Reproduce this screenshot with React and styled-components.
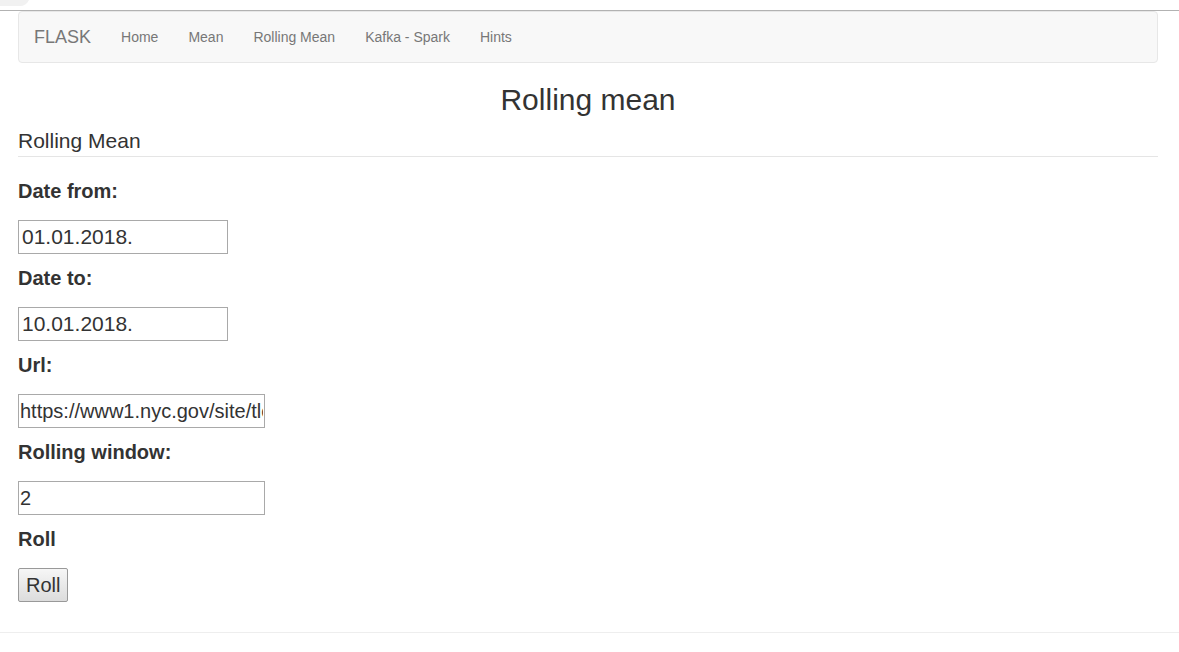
import React from "react";
import styled, { createGlobalStyle } from "styled-components";

const GlobalStyle = createGlobalStyle`
  *, *::before, *::after { box-sizing: border-box; }
  body {
    margin: 0;
    background: #fff;
    color: #333;
    font-family: "Liberation Sans", Arial, sans-serif;
    font-size: 20px;
  }
`;

const TopStrip = styled.div`
  display: flex;
  align-items: flex-start;
  height: 11px;
  border-bottom: 1px solid #b2b2b2;
`;

const TabEdge = styled.svg`
  display: block;
  width: 29px;
  height: 6px;
`;

const Page = styled.div`
  padding: 0 21px 30px 18px;
`;

const Navbar = styled.nav`
  display: flex;
  min-height: 52px;
  border: 1px solid #e7e7e7;
  border-radius: 4px;
  background: #f8f8f8;
`;

const Brand = styled.a`
  padding: 15px;
  color: #777;
  font-size: 18px;
  line-height: 20px;
  text-decoration: none;
`;

const NavList = styled.ul`
  display: flex;
  margin: 0;
  padding: 0;
  list-style: none;
`;

const NavLink = styled.a`
  display: block;
  padding: 15px;
  color: #777;
  font-size: 14px;
  line-height: 20px;
  text-decoration: none;

  &:hover { color: #333; }
`;

const Title = styled.h2`
  margin: 20px 0 10px;
  font-size: 30px;
  font-weight: 400;
  line-height: 33px;
  text-align: center;
`;

const Legend = styled.h3`
  margin: 0 0 20px;
  border-bottom: 1px solid #e5e5e5;
  font-size: 21px;
  font-weight: 400;
  line-height: 30px;
`;

const Form = styled.form`
  display: flex;
  flex-direction: column;
  gap: 10px;
`;

const Field = styled.div`
  display: flex;
  flex-direction: column;
  align-items: flex-start;
  gap: 15px;
`;

const Label = styled.label`
  font-weight: 700;
  line-height: 28px;
`;

const TextInput = styled.input`
  width: ${(p) => (p.$date ? "210px" : "247px")};
  max-width: 100%;
  height: 34px;
  padding: ${(p) => (p.$date ? "1px 3px" : "1px")};
  border: 1px solid #a9a9a9;
  border-radius: 0;
  background: #fff;
  color: #333;
  font-family: inherit;
  font-size: ${(p) => (p.$date ? "21px" : "20px")};
`;

const SubmitButton = styled.button`
  height: 34px;
  padding: 1px 7px;
  border: 1px solid #999;
  border-radius: 2px;
  background: linear-gradient(#f6f6f6, #dcdcdc);
  color: #333;
  font-family: inherit;
  font-size: 20px;
`;

const Divider = styled.hr`
  margin: 0 0 19px;
  border: 0;
  border-top: 1px solid #eee;
`;

const links = ["Home", "Mean", "Rolling Mean", "Kafka - Spark", "Hints"];

const fields = [
  { id: "date-from", label: "Date from:", value: "01.01.2018.", date: true },
  { id: "date-to", label: "Date to:", value: "10.01.2018.", date: true },
  { id: "url", label: "Url:", value: "https://www1.nyc.gov/site/tlc/about/tlc-trip-record-data.page" },
  { id: "window", label: "Rolling window:", value: "2" },
];

export default function App() {
  return (
    <>
      <GlobalStyle />
      <TopStrip>
        <TabEdge viewBox="0 0 29 6" aria-hidden="true">
          <path d="M0 0H29C27 4 24 6 20 6H0Z" fill="#f1f1f1" />
        </TabEdge>
      </TopStrip>
      <Page>
        <Navbar>
          <Brand href="#">FLASK</Brand>
          <NavList>
            {links.map((text) => (
              <li key={text}>
                <NavLink href="#">{text}</NavLink>
              </li>
            ))}
          </NavList>
        </Navbar>
        <Title>Rolling mean</Title>
        <Legend>Rolling Mean</Legend>
        <Form onSubmit={(e) => e.preventDefault()}>
          {fields.map((f) => (
            <Field key={f.id}>
              <Label htmlFor={f.id}>{f.label}</Label>
              <TextInput id={f.id} type="text" defaultValue={f.value} $date={f.date} />
            </Field>
          ))}
          <Field>
            <Label htmlFor="roll">Roll</Label>
            <SubmitButton id="roll" type="submit">Roll</SubmitButton>
          </Field>
        </Form>
      </Page>
      <Divider />
    </>
  );
}
